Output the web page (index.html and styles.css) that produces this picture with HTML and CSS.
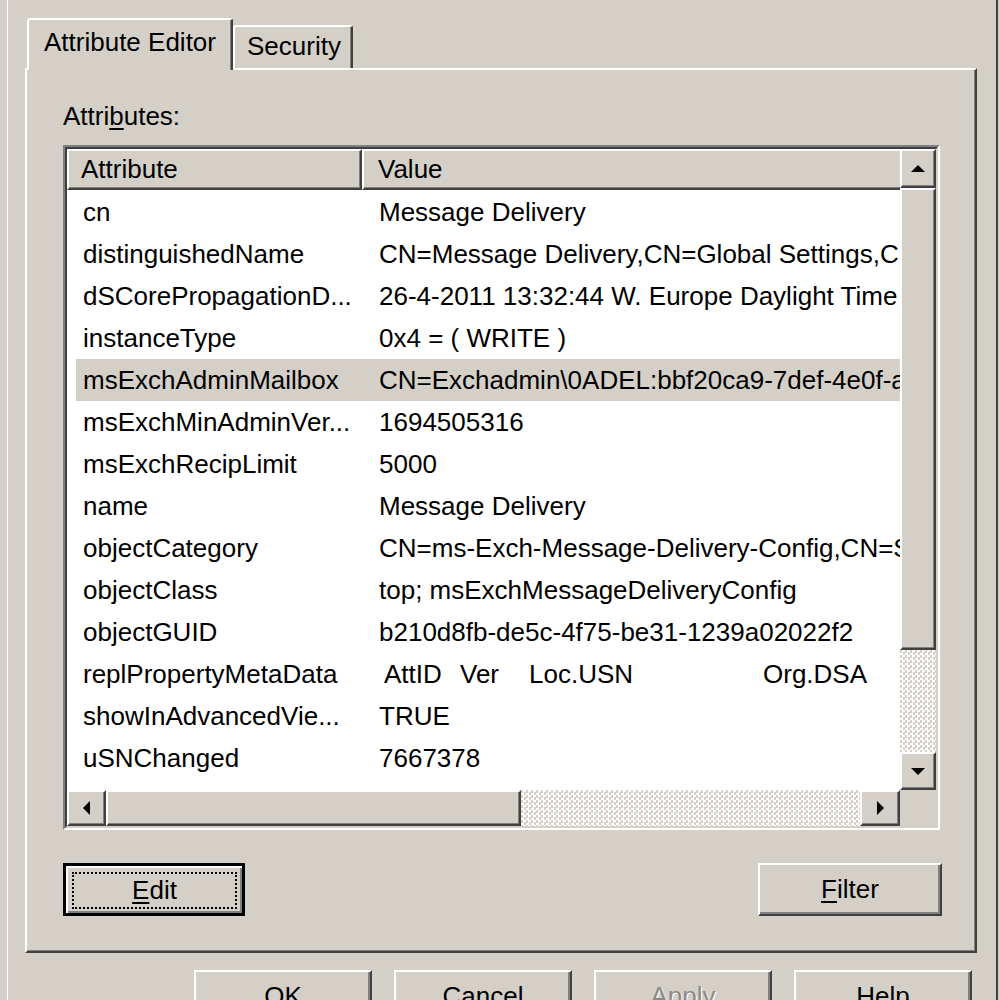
FILE: index.html
```html
<!DOCTYPE html>
<html>
<head>
<meta charset="utf-8">
<title>Properties</title>
<link rel="stylesheet" href="styles.css">
</head>
<body>
<div class="window">
  <div class="frame">
    <div class="tabs">
      <div class="tab active">Attribute Editor</div>
      <div class="tab">Security</div>
    </div>
    <div class="panel">
      <div class="label">Attri<u>b</u>utes:</div>
      <div class="listbox">
        <div class="listbox-in">
          <div class="viewport">
            <div class="lv-head">
              <div class="hcell attr">Attribute</div>
              <div class="hcell val">Value</div>
            </div>
            <div class="lv-body">
              <div class="row"><div class="c-attr">cn</div><div class="c-val">Message Delivery</div></div>
              <div class="row"><div class="c-attr">distinguishedName</div><div class="c-val">CN=Message Delivery,CN=Global Settings,CN=Microsoft Exchange,CN=Services</div></div>
              <div class="row"><div class="c-attr">dSCorePropagationD...</div><div class="c-val">26-4-2011 13:32:44 W. Europe Daylight Time</div></div>
              <div class="row"><div class="c-attr">instanceType</div><div class="c-val">0x4 = ( WRITE )</div></div>
              <div class="row sel"><div class="c-attr">msExchAdminMailbox</div><div class="c-val">CN=Exchadmin\0ADEL:bbf20ca9-7def-4e0f-a1b2-3c4d5e6f7a8b</div></div>
              <div class="row"><div class="c-attr">msExchMinAdminVer...</div><div class="c-val">1694505316</div></div>
              <div class="row"><div class="c-attr">msExchRecipLimit</div><div class="c-val">5000</div></div>
              <div class="row"><div class="c-attr">name</div><div class="c-val">Message Delivery</div></div>
              <div class="row"><div class="c-attr">objectCategory</div><div class="c-val">CN=ms-Exch-Message-Delivery-Config,CN=Schema,CN=Configuration</div></div>
              <div class="row"><div class="c-attr">objectClass</div><div class="c-val">top; msExchMessageDeliveryConfig</div></div>
              <div class="row"><div class="c-attr">objectGUID</div><div class="c-val">b210d8fb-de5c-4f75-be31-1239a02022f2</div></div>
              <div class="row"><div class="c-attr">replPropertyMetaData</div><div class="c-val meta"><span class="m1">AttID</span><span class="m2">Ver</span><span class="m3">Loc.USN</span><span class="m4">Org.DSA</span></div></div>
              <div class="row"><div class="c-attr">showInAdvancedVie...</div><div class="c-val">TRUE</div></div>
              <div class="row"><div class="c-attr">uSNChanged</div><div class="c-val">7667378</div></div>
              <div class="row"><div class="c-attr">uSNCreated</div><div class="c-val">7690</div></div>
            </div>
          </div>
          <div class="vscroll">
            <div class="sbtn vbtn"><span class="arr-up"></span></div>
            <div class="thumb vthumb"></div>
            <div class="track"></div>
            <div class="sbtn vbtn"><span class="arr-down"></span></div>
          </div>
          <div class="hscroll">
            <div class="sbtn hbtn"><span class="arr-left"></span></div>
            <div class="thumb hthumb"></div>
            <div class="track"></div>
            <div class="sbtn hbtn"><span class="arr-right"></span></div>
          </div>
          <div class="corner"></div>
        </div>
      </div>
      <div class="btnrow">
        <div class="btn default"><span class="focus"><u>E</u>dit</span></div>
        <div class="btn filter"><u>F</u>ilter</div>
      </div>
    </div>
    <div class="footer">
      <div class="btn fbtn">OK</div>
      <div class="btn fbtn">Cancel</div>
      <div class="btn fbtn disabled">Apply</div>
      <div class="btn fbtn">Help</div>
    </div>
  </div>
</div>
</body>
</html>
```
FILE: styles.css
```css
* { box-sizing: border-box; }
html, body { margin: 0; padding: 0; }
body {
  background: #d4d0c8;
  font-family: "Liberation Sans", Arial, sans-serif;
  font-size: 26px;
  color: #000;
}
u { text-decoration-thickness: 2px; text-underline-offset: 3px; }

.window {
  width: 1000px;
  height: 1000px;
  overflow: hidden;
  background: #d4d0c8;
  padding-left: 7px;
  padding-right: 2px;
}
.frame {
  height: 100%;
  border-left: 1px solid #fff;
  border-right: 2px solid #404040;
  padding: 18px 19px 0 17px;
}

/* tabs */
.tabs {
  display: flex;
  align-items: flex-end;
  height: 50px;
  padding-left: 2px;
}
.tab {
  height: 43px;
  border-top: 2px solid #fff;
  border-left: 2px solid #fff;
  border-right: 2px solid #404040;
  box-shadow: inset -1px 0 #808080;
  border-radius: 3px 3px 0 0;
  padding: 0 10px 2px 12px;
  display: flex;
  align-items: center;
  white-space: nowrap;
  background: #d4d0c8;
}
.tab.active {
  position: relative;
  z-index: 1;
  height: 52px;
  width: 206px;
  margin-bottom: -2px;
  justify-content: center;
  padding: 0 0 6px 0;
}

/* panel */
.panel {
  border: 2px solid;
  border-color: #fff #404040 #404040 #fff;
  box-shadow: inset -1px -1px #808080;
  padding: 31px 35px 35px 36px;
}
.label { height: 30px; line-height: 30px; }

.listbox {
  margin-top: 14px;
  height: 685px;
  border: 2px solid;
  border-color: #808080 #fff #fff #808080;
}
.listbox-in {
  height: 100%;
  border: 2px solid;
  border-color: #404040 #d4d0c8 #d4d0c8 #404040;
  background: #fff;
  display: grid;
  grid-template-columns: 1fr 36px;
  grid-template-rows: 1fr 36px;
}
.viewport { overflow: hidden; min-width: 0; min-height: 0; }

.lv-head { display: flex; height: 41px; width: 1200px; }
.hcell {
  flex: none;
  border: 2px solid;
  border-color: #fff #404040 #404040 #fff;
  box-shadow: inset -1px -1px #808080;
  background: #d4d0c8;
  display: flex;
  align-items: center;
}
.hcell.attr { width: 295px; padding-left: 12px; }
.hcell.val { width: 800px; padding-left: 14px; }

.lv-body { padding-top: 1px; }
.row {
  display: flex;
  align-items: center;
  height: 42px;
  margin-left: 9px;
  width: 1200px;
  white-space: nowrap;
}
.row.sel { background: #d4d0c8; }
.c-attr { width: 286px; flex: none; padding-left: 7px; overflow: hidden; }
.c-val { padding-left: 17px; }
.meta span { display: inline-block; }
.meta .m1 { padding-left: 5px; width: 81px; }
.meta .m2 { width: 69px; }
.meta .m3 { width: 234px; }

/* scrollbars */
.sbtn, .thumb {
  border: 2px solid;
  border-color: #fff #404040 #404040 #fff;
  box-shadow: inset -1px -1px #808080;
  background: #d4d0c8;
}
.sbtn { display: flex; align-items: center; justify-content: center; flex: none; }
.track {
  flex: 1;
  background: repeating-conic-gradient(#ffffff 0 25%, #d4d0c8 0 50%) 0 0 / 5px 5px;
}
.vscroll { display: flex; flex-direction: column; }
.vbtn { height: 39px; }
.vthumb { height: 462px; flex: none; }
.vscroll .vbtn:last-child { height: 38px; }
.hscroll { display: flex; }
.hbtn { width: 39px; }
.hscroll .hbtn:last-child { width: 40px; }
.hthumb { width: 415px; flex: none; }
.corner { background: #d4d0c8; }

.arr-up, .arr-down, .arr-left, .arr-right { width: 0; height: 0; }
.arr-up { border-left: 7px solid transparent; border-right: 7px solid transparent; border-bottom: 7px solid #000; }
.arr-down { border-left: 7px solid transparent; border-right: 7px solid transparent; border-top: 7px solid #000; }
.arr-left { border-top: 7px solid transparent; border-bottom: 7px solid transparent; border-right: 7px solid #000; }
.arr-right { border-top: 7px solid transparent; border-bottom: 7px solid transparent; border-left: 7px solid #000; }

/* buttons */
.btnrow { display: flex; justify-content: space-between; margin-top: 33px; }
.btn {
  height: 53px;
  border: 2px solid;
  border-color: #fff #404040 #404040 #fff;
  box-shadow: inset -2px -2px #808080;
  background: #d4d0c8;
  display: flex;
  align-items: center;
  justify-content: center;
  white-space: nowrap;
}
.btn.default {
  width: 182px;
  border: 3px solid #000;
  box-shadow: inset 2px 2px #fff, inset -2px -2px #808080;
}
.btn.default .focus {
  flex: 1;
  align-self: stretch;
  margin: 6px 5px 4px 6px;
  border: 2px dotted #000;
  display: flex;
  align-items: center;
  justify-content: center;
}
.btn.filter { width: 184px; margin-right: -2px; }

.footer {
  display: flex;
  justify-content: flex-end;
  gap: 22px;
  margin-top: 17px;
  padding-right: 5px;
}
.fbtn { width: 178px; }
.fbtn.disabled { color: #8c8a86; text-shadow: 1px 1px #fff; }
```
